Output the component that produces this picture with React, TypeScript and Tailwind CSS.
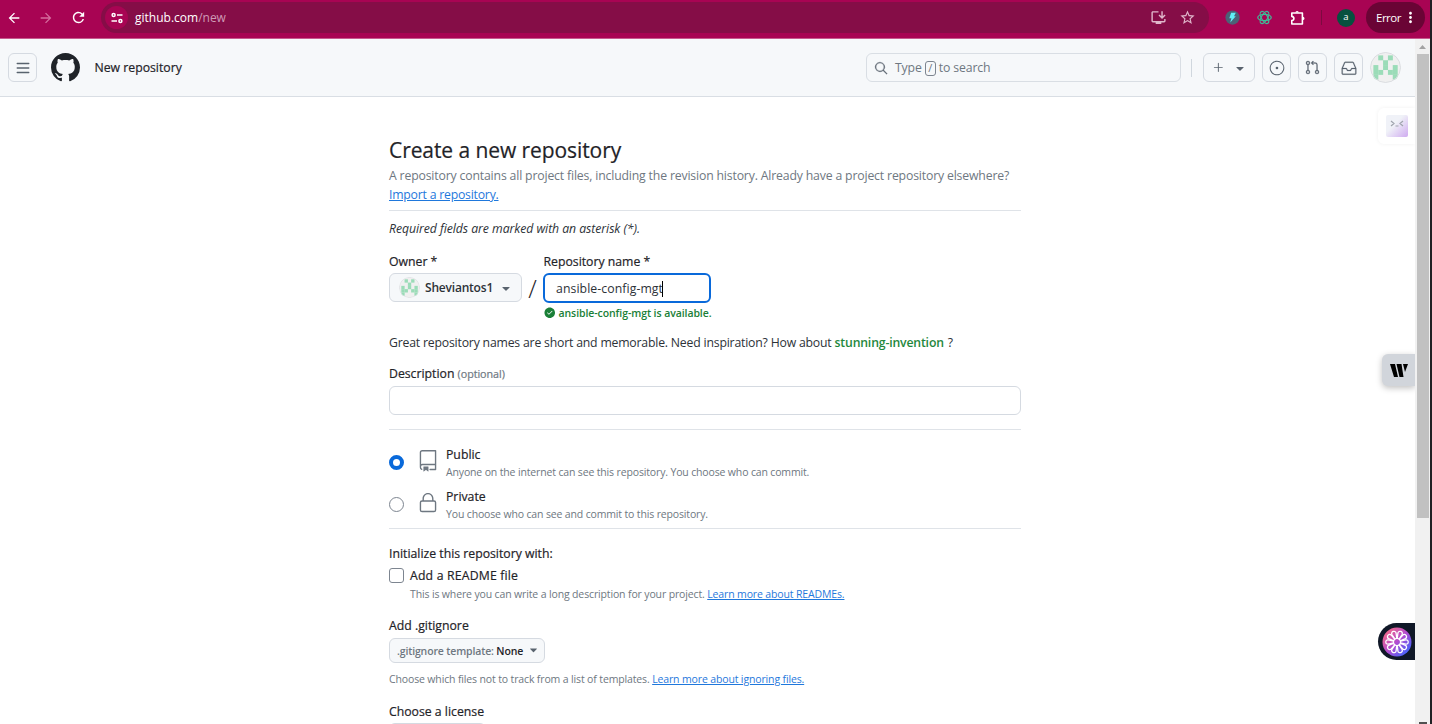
import React from "react";
import {
  GoSearch, GoPlus, GoTriangleDown, GoIssueOpened,
  GoGitPullRequest, GoInbox, GoRepo, GoLock, GoCheckCircleFill,
} from "react-icons/go";
import {
  MdArrowBack, MdArrowForward, MdRefresh, MdOutlineInstallDesktop, MdStarBorder,
  MdMoreVert,
} from "react-icons/md";

const CELLS = [[1, 0], [3, 0], [2, 1], [0, 2], [2, 2], [4, 2], [0, 3], [1, 3], [3, 3], [4, 3], [0, 4], [4, 4]];

const MEDIUM = "[-webkit-text-stroke:0.2px_currentColor]";

function Identicon({ className }: { className: string }) {
  return (
    <svg viewBox="-0.7 -0.7 6.4 6.4" className={`shrink-0 rounded-full ${className}`}>
      <circle cx="2.5" cy="2.5" r="3.2" fill="#f0f0f0" />
      {CELLS.map(([x, y]) => (
        <rect key={`${x}-${y}`} x={x} y={y} width="1.02" height="1.02" fill="#9bdcb8" />
      ))}
      <circle cx="2.5" cy="2.5" r="3.1" fill="none" stroke="#d9dce0" strokeWidth=".2" />
    </svg>
  );
}

function BrowserBar() {
  return (
    <div className="flex h-[39px] shrink-0 items-center border-b border-[#c65a8e] bg-[#a80453] pb-[3px] text-white">
      <MdArrowBack className="ml-[6px] size-4" />
      <MdArrowForward className="ml-4 size-4 text-[#d56c9d]" />
      <MdRefresh className="ml-4 size-[17px]" />
      <div className="ml-[14px] flex h-[31px] w-[1108px] items-center rounded-full bg-[#850d47]">
        <span className="ml-1 flex size-[23px] items-center justify-center rounded-full bg-[#a80453]">
          <svg viewBox="0 0 12 12" className="size-3" fill="none" stroke="white" strokeWidth="1.5">
            <circle cx="2.6" cy="3" r="1.5" />
            <path d="M6 3h5.5M.5 9H6" />
            <circle cx="9.4" cy="9" r="1.5" />
          </svg>
        </span>
        <span className="ml-[7px] mt-px text-[12px]">github.com<span className="text-[#cf9ab6]">/new</span></span>
        <MdOutlineInstallDesktop className="ml-auto size-[17px] text-[#dfb6ca]" />
        <MdStarBorder className="ml-3 mr-[13px] size-[17px] text-[#dfb6ca]" />
      </div>
      <svg viewBox="0 0 16 16" className="ml-[16px] size-[15px]">
        <circle cx="8" cy="8" r="7.6" fill="#4c6176" />
        <path d="M6.5 3h5L9.6 6.6h1.9L5.6 13.4l1.2-4.7H4.6z" fill="#5ff0f5" />
      </svg>
      <svg viewBox="0 0 16 16" className="ml-[17px] size-[15px]" fill="none" stroke="#3ebd98" strokeWidth="1.3">
        <ellipse cx="8" cy="8" rx="7.2" ry="3.3" />
        <ellipse cx="8" cy="8" rx="7.2" ry="3.3" transform="rotate(60 8 8)" />
        <ellipse cx="8" cy="8" rx="7.2" ry="3.3" transform="rotate(120 8 8)" />
      </svg>
      <svg viewBox="0 0 16 16" className="ml-[18px] size-4" fill="none" stroke="white" strokeWidth="1.6" strokeLinejoin="round">
        <path d="M1.8 3H12.4V14H1.8V10.6C4.6 10.2 4.6 6.8 1.8 6.4Z" />
        <path d="M5.4 2.6a1.7 1.7 0 0 1 3.4 0zM12.8 6.7a1.7 1.7 0 0 1 0 3.4z" fill="white" stroke="none" />
      </svg>
      <span className="ml-[15px] h-[15px] w-px bg-[#7d0a40]" />
      <span className="ml-[15px] flex size-[18px] items-center justify-center rounded-full bg-[#06503f] pb-px text-[9.5px]">a</span>
      <div className="ml-[11px] flex h-[31px] w-[59px] items-center rounded-full bg-[#6a0435]">
        <span className="ml-[10px] w-[25px] text-[11.5px] tracking-[-0.5px]">Error</span>
        <MdMoreVert className="ml-[1px] size-[17px] shrink-0" />
      </div>
    </div>
  );
}

function IconButton({ children, className = "w-[29px]" }: { children: React.ReactNode; className?: string }) {
  return (
    <button className={`flex h-[29px] shrink-0 items-center justify-center rounded-md border border-[#d5dae1] text-[#59636e] ${className}`}>
      {children}
    </button>
  );
}

function Header() {
  return (
    <header className="flex h-[58px] shrink-0 items-center border-b border-[#d9dee4] bg-[#f6f8fa] pl-2">
      <IconButton>
        <svg viewBox="0 0 16 16" className="size-4" stroke="currentColor" strokeWidth="1.3" strokeLinecap="round">
          <path d="M2.2 3.5h11.6M2.2 8h11.6M2.2 12.5h11.6" />
        </svg>
      </IconButton>
      <svg viewBox="0 0 16 16" className="ml-[14px] size-[29px] text-[#1f2328]" fill="currentColor">
        <path d="M8 0c4.42 0 8 3.58 8 8a8.013 8.013 0 0 1-5.45 7.59c-.4.08-.55-.17-.55-.38 0-.27.01-1.13.01-2.2 0-.75-.25-1.23-.54-1.48 1.78-.2 3.65-.88 3.65-3.95 0-.88-.31-1.59-.82-2.15.08-.2.36-1.02-.08-2.12 0 0-.67-.22-2.2.82-.64-.18-1.32-.27-2-.27-.68 0-1.36.09-2 .27-1.53-1.03-2.2-.82-2.2-.82-.44 1.1-.16 1.92-.08 2.12-.51.56-.82 1.28-.82 2.15 0 3.06 1.86 3.75 3.64 3.95-.23.2-.44.55-.51 1.07-.46.21-1.61.55-2.33-.66-.15-.24-.6-.83-1.23-.82-.67.01-.27.38.01.53.34.19.73.9.82 1.13.16.45.68 1.31 2.69.94 0 .67.01 1.3.01 1.49 0 .21-.15.45-.55.38A7.995 7.995 0 0 1 0 8c0-4.42 3.58-8 8-8Z" />
      </svg>
      <span className={`ml-[14.5px] mt-[2px] text-[12.25px] ${MEDIUM}`}>New repository</span>
      <div className="ml-auto flex h-[29px] w-[315px] items-center rounded-md border border-[#d9dee4] pl-[7px] text-[12.25px] tracking-[-0.13px] text-[#6e7781]">
        <GoSearch className="size-[14px] text-[#59636e]" strokeWidth=".6" />
        <span className="ml-[7px] mt-[2px]">Type</span>
        <span className="ml-[3px] mr-[3px] mt-[2px] flex h-[15px] w-[11px] items-center justify-center rounded-[3px] border border-[#7d8590] text-[11px]">/</span>
        <span className="mt-[2px]">to search</span>
      </div>
      <span className="ml-[10px] h-[18px] w-px bg-[#d0d7de]" />
      <IconButton className="ml-[11px] w-[52px]">
        <GoPlus className="size-[15px]" />
        <GoTriangleDown className="ml-[7px] mt-[3px] size-[14px]" />
      </IconButton>
      <IconButton className="ml-[7px] w-[29px]"><GoIssueOpened className="size-4" /></IconButton>
      <IconButton className="ml-[7px] w-[29px]"><GoGitPullRequest className="size-[15px]" strokeWidth=".4" /></IconButton>
      <IconButton className="ml-[7px] w-[29px]"><GoInbox className="size-4" strokeWidth=".3" /></IconButton>
      <Identicon className="ml-[7px] mr-[14px] size-[31px]" />
    </header>
  );
}

function Visibility({ icon, title, note, checked, className }: {
  icon: React.ReactNode; title: string; note: string; checked?: boolean; className: string;
}) {
  return (
    <div className={`flex h-[35px] items-center ${className}`}>
      <span className={checked
        ? "size-[15px] rounded-full border-4 border-[#0969da] bg-white"
        : "size-[15px] rounded-full border border-[#7d8590] bg-white"} />
      <span className="ml-[13px] mt-[-3px] text-[#6e7781]">{icon}</span>
      <div className="ml-[7px]">
        <div className={`h-[18px] leading-[20px] ${MEDIUM}`}>{title}</div>
        <div className="h-[17px] text-[10.5px] leading-[18px] tracking-[-0.15px] text-[#6e7781]">{note}</div>
      </div>
    </div>
  );
}

function RepositoryForm() {
  return (
    <main className="ml-[389px] w-[632px] whitespace-nowrap pt-[38px] text-[12.25px] leading-[22px]">
      <h1 className={`h-[31px] text-[21px] leading-[30px] tracking-[-0.08px] ${MEDIUM}`}>Create a new repository</h1>
      <p className="leading-[19px] tracking-[-0.165px] text-[#6e7781]">
        A repository contains all project files, including the revision history. Already have a project repository elsewhere?<br />
        <a className="tracking-[-0.22px] text-[#1f78dc] underline">Import a repository.</a>
      </p>
      <hr className="mt-[6px] border-[#dfe3e8]" />
      <p className="mt-[7px] h-5 italic tracking-[-0.06px] text-[#2d3238]">Required fields are marked with an asterisk (*).</p>
      <div className="mt-[13px] flex">
        <div className="w-[133px]">
          <div className={`h-[22px] ${MEDIUM}`}>Owner *</div>
          <button className="flex h-[29px] w-full items-center rounded-md border border-[#d5dae1] bg-[#f6f8fa] pl-[9px]">
            <Identicon className="size-[21px]" />
            <span className="ml-[5px] mt-px text-[12px] font-semibold tracking-[-0.2px] text-[#2d3238]">Sheviantos1</span>
            <GoTriangleDown className="ml-[6px] mt-[2px] size-[14px] text-[#59636e]" />
          </button>
        </div>
        <span className="mt-[22px] w-[21px] text-center text-[25px] font-light leading-[30px]">/</span>
        <div>
          <div className={`ml-[0.5px] h-[22px] ${MEDIUM}`}>Repository name *</div>
          <div className="flex h-[30px] w-[168px] items-center rounded-md border-2 border-[#0969da] pl-[11px] pt-px tracking-[0.08px] text-[#2d3238]">
            ansible-config-mgt<span className="ml-[-1px] h-4 w-px bg-black" />
          </div>
          <div className="ml-px flex h-5 items-center text-[10.5px] font-semibold tracking-[-0.08px] text-[#1a7f37]">
            <GoCheckCircleFill className="mr-[3px] size-[11.5px]" />ansible-config-mgt is available.
          </div>
        </div>
      </div>
      <p className="mt-[9px] h-5 tracking-[-0.195px] text-[#2d3238]">
        Great repository names are short and memorable. Need inspiration? How about <b className="mr-px font-semibold tracking-[-0.16px] text-[#1f883d]">stunning-invention</b> ?
      </p>
      <div className={`mt-[11px] h-5 ${MEDIUM}`}>Description <span className="text-[10.75px] tracking-[-0.05px] text-[#6e7781]">(optional)</span></div>
      <div className="mt-[3px] h-[29px] rounded-md border border-[#d5dae1] bg-white" />
      <hr className="mt-[14px] border-[#dfe3e8]" />
      <Visibility className="mt-[15px]" checked icon={<GoRepo className="size-[22px]" />} title="Public" note="Anyone on the internet can see this repository. You choose who can commit." />
      <Visibility className="mt-[7px]" icon={<GoLock className="size-[22px]" />} title="Private" note="You choose who can see and commit to this repository." />
      <hr className="mt-[6px] border-[#dfe3e8]" />
      <div className={`mt-[14px] h-5 ${MEDIUM}`}>Initialize this repository with:</div>
      <div className={`mt-[3px] flex h-[19px] items-center tracking-[0.18px] ${MEDIUM}`}>
        <span className="mr-[6px] mt-[-1px] size-[15px] rounded-[3px] border border-[#7d8590]" /><span className="mt-px">Add a README file</span>
      </div>
      <p className="ml-[21px] h-[18px] text-[10.5px] leading-[18px] tracking-[-0.14px] text-[#6e7781]">
        This is where you can write a long description for your project. <a className="text-[#1f78dc] underline">Learn more about READMEs.</a>
      </p>
      <div className={`mt-3 h-5 ${MEDIUM}`}>Add .gitignore</div>
      <button className="mt-[3px] flex h-[25px] w-[156px] items-center rounded-md border border-[#d5dae1] bg-[#f6f8fa] pl-[7px] text-[10.5px] font-semibold tracking-[-0.15px]">
        <span className="text-[#6e7781]">.gitignore template:</span>&nbsp;None
        <GoTriangleDown className="ml-[4px] size-[13px] shrink-0 text-[#59636e]" />
      </button>
      <p className="mt-[7px] h-[18px] text-[10.5px] leading-[18px] tracking-[-0.14px] text-[#6e7781]">
        Choose which files not to track from a list of templates. <a className="text-[#1f78dc] underline">Learn more about ignoring files.</a>
      </p>
      <div className={`mt-[13px] h-5 ${MEDIUM}`}>Choose a license</div>
      <div className="mt-[2px] h-[25px] w-[97px] rounded-md border border-[#d5dae1] bg-[#f6f8fa]" />
    </main>
  );
}

function SideWidgets() {
  return (
    <>
      <div className="absolute right-0 top-[69px] flex h-[36px] w-[37px] items-center rounded-l-md bg-white pl-2 shadow-[0_0_4px_rgba(0,0,0,0.06)]">
        <svg viewBox="0 0 22 22" className="size-[22px]">
          <defs>
            <linearGradient id="face" x1=".4" y1=".4" x2="1" y2="1">
              <stop offset="0" stopColor="#f0f2f8" /><stop offset="1" stopColor="#cfaaf0" />
            </linearGradient>
          </defs>
          <rect width="22" height="22" rx="2" fill="url(#face)" />
          <path d="M5 6l3 2.5L5 11M17 6l-3 2.5 3 2.5M9.5 11h3" fill="none" stroke="#a0a4ae" strokeWidth="1.2" />
        </svg>
      </div>
      <div className="absolute right-0 top-[315px] flex h-[32px] w-[33px] items-center rounded-l-md bg-[#d1d5db] pl-[8px] pt-[2px] shadow-[0_2px_6px_rgba(0,0,0,0.25)]">
        <svg viewBox="0 0 18 14" className="h-[14px] w-[18px]">
          <path d="M0 0h5l3 13H4zM6.5 0h5l2 13h-4zM13 0h5l-3 8z" fill="#000" />
        </svg>
      </div>
      <div className="absolute right-0 top-[584px] flex h-[37px] w-[37px] items-center rounded-l-full bg-[#101827] pl-1">
        <svg viewBox="0 0 30 30" className="size-[30px]">
          <defs>
            <linearGradient id="flower" x1=".1" y1=".1" x2=".9" y2=".9">
              <stop offset="0" stopColor="#f56a86" /><stop offset=".5" stopColor="#b34bd0" /><stop offset="1" stopColor="#3d66ff" />
            </linearGradient>
          </defs>
          <circle cx="15" cy="15" r="14.5" fill="url(#flower)" />
          <g fill="none" stroke="#fff" strokeWidth="1.3">
            {[20, 54, 90, 126, 160, 200, 234, 270, 306, 340].map((a) => (
              <path key={a} d="M14 11.5L12.8 6.2C12.4 3 17.6 3 17.2 6.2L16 11.5z" transform={`rotate(${a} 15 15)`} />
            ))}
          </g>
        </svg>
      </div>
    </>
  );
}

export default function App() {
  return (
    <div className="flex h-[724px] w-[1432px] overflow-hidden bg-white font-['Open_Sans','Noto_Sans',sans-serif] text-[#1f2328]">
      <div className="flex w-[1430px] flex-col">
        <BrowserBar />
        <div className="flex h-[685px]">
          <div className="relative h-full w-[1415px] overflow-hidden">
            <Header />
            <RepositoryForm />
            <SideWidgets />
          </div>
          <div className="flex w-[15px] flex-col items-center bg-[#f1f1f1]">
            <svg viewBox="0 0 15 15" className="size-[15px]"><path d="M4 10l3.5-4L11 10z" fill="#a3a3a3" /></svg>
            <div className="h-[464px] w-[12px] bg-[#c1c1c1]" />
            <svg viewBox="0 0 8 2" className="mt-auto h-[2px] w-2"><path d="M0 0h8v2H0z" fill="#505050" /></svg>
          </div>
        </div>
      </div>
      <div className="w-[2px] bg-[#202124]" />
    </div>
  );
}
